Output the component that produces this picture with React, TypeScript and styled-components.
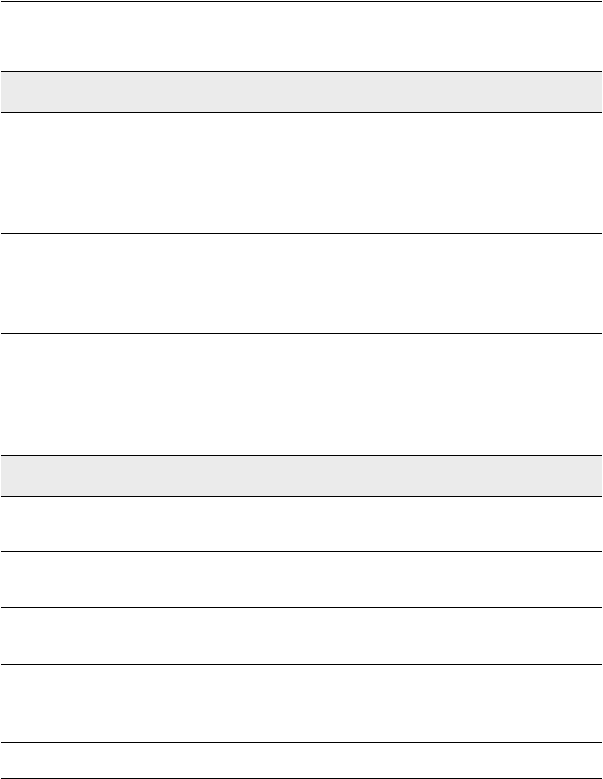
import React from 'react';
import styled, { createGlobalStyle } from 'styled-components';

const GlobalStyle = createGlobalStyle`
  body {
    margin: 0;
    background: #fff;
    font-family: "Liberation Sans", Arial, sans-serif;
  }
`;

const Page = styled.div`
  width: 601px;
  padding: 1px 0 0 1px;
  display: flex;
  flex-direction: column;
`;

const Section = styled.section<{ $gap?: number }>`
  display: flex;
  flex-direction: column;
  margin-top: ${(p) => p.$gap ?? 0}px;
`;

const Caption = styled.div`
  height: 69px;
  border-top: 1px solid #000;
`;

const HeaderBand = styled.div`
  height: 40px;
  background: #ebebeb;
  border-top: 1px solid #000;
  border-bottom: 1px solid #000;
`;

const Row = styled.div<{ $h: number }>`
  height: ${(p) => p.$h}px;
  border-bottom: 1px solid #000;
`;

const firstRows = [120, 99];
const secondRows = [54, 55, 56, 77, 35];

const App: React.FC = () => (
  <>
    <GlobalStyle />
    <Page>
      <Section>
        <Caption />
        <HeaderBand />
        {firstRows.map((h, i) => (
          <Row key={i} $h={h} />
        ))}
      </Section>
      <Section $gap={121}>
        <HeaderBand />
        {secondRows.map((h, i) => (
          <Row key={i} $h={h} />
        ))}
      </Section>
    </Page>
  </>
);

export default App;
